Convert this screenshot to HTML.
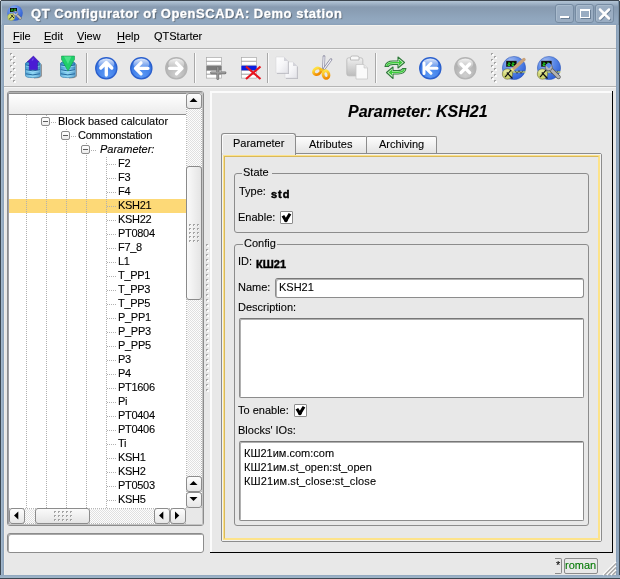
<!DOCTYPE html><html><head><meta charset="utf-8"><style>
*{box-sizing:border-box;margin:0;padding:0}
html,body{width:620px;height:579px;overflow:hidden;background:#e8e8e8;font-family:"Liberation Sans",sans-serif;font-size:11px;color:#000}
.a{position:absolute}
.t{position:absolute;white-space:nowrap;font-size:11px;line-height:14px;will-change:transform;-webkit-text-stroke:0.1px currentColor}
u{text-decoration:underline;text-underline-offset:2px}
svg{position:absolute;overflow:visible}
.btn{position:absolute;border:1px solid #8c8c8c;border-radius:3px;background:linear-gradient(#fdfdfd,#e6e6e6)}
</style></head><body>
<div class="a" style="left:0px;top:0px;width:620px;height:25px;background:linear-gradient(#3d4650 0,#3d4650 1px,#b3c4d4 1px,#a5b8cb 3px,#889bb1 7px,#8a9eb4 11px,#90a6bd 18px,#93a9c1 23px,#8ca2ba 24px,#8ca2ba 25px)"></div>
<div class="t" style="left:31px;top:7px;font-weight:bold;font-size:13px;letter-spacing:0.52px;color:#fff;-webkit-text-stroke:0.3px #fff;text-shadow:1px 1px 1px #55606c">QT Configurator of OpenSCADA: Demo station</div>
<div class="a" style="left:555px;top:4px;width:19px;height:19px;border:1px solid #768ba2;border-radius:3px;background:#9aadc2;box-shadow:inset 1px 1px 0 #a9bbcd"></div>
<div class="a" style="left:575px;top:4px;width:19px;height:19px;border:1px solid #768ba2;border-radius:3px;background:#9aadc2;box-shadow:inset 1px 1px 0 #a9bbcd"></div>
<div class="a" style="left:595px;top:4px;width:19px;height:19px;border:1px solid #768ba2;border-radius:3px;background:#9aadc2;box-shadow:inset 1px 1px 0 #a9bbcd"></div>
<div class="a" style="left:560px;top:16px;width:9px;height:2px;background:#fff;box-shadow:1px 1px 0 #6a7f95"></div>
<div class="a" style="left:580px;top:9px;width:10px;height:9px;border:1px solid #fff;border-top-width:2px;box-shadow:1px 1px 0 #6a7f95"></div>
<svg style="left:599px;top:9px" width="11" height="10" viewBox="0 0 11 10"><path d="M1 0.5 L10 9.5 M10 0.5 L1 9.5" stroke="#6a7f95" stroke-width="2.5" stroke-linecap="round" transform="translate(0.8,0.8)"/><path d="M1 0.5 L10 9.5 M10 0.5 L1 9.5" stroke="#fff" stroke-width="2.5" stroke-linecap="round"/></svg>
<svg style="left:7px;top:5px" width="16" height="16" viewBox="0 0 16 16">
<defs><radialGradient id="gb" cx="0.4" cy="0.3" r="0.75"><stop offset="0" stop-color="#9cb8f2"/><stop offset="0.6" stop-color="#4a78e0"/><stop offset="1" stop-color="#2a58c8"/></radialGradient></defs>
<circle cx="8" cy="8" r="7.8" fill="url(#gb)"/>
<rect x="3" y="3" width="7" height="4" fill="#0a0a0a"/><path d="M4.2 4.2 h1.6 v0.8 h-1.6 v0.9 h1.6 M7 4.2 h1.6 v0.8 h-1.6 v0.9 h1.6" stroke="#22cc22" stroke-width="0.7" fill="none"/>
<circle cx="4.2" cy="12" r="3.6" fill="#cfd86a" stroke="#7a8030" stroke-width="0.3"/><path d="M2.2 14.2 L6 10.4 M4 9.8 L7 13" stroke="#111" stroke-width="0.9"/>
<path d="M8.8 8.8 L13.2 13.2" stroke="#666" stroke-width="2.8" stroke-linecap="round"/><path d="M8.8 8.8 L13.2 13.2" stroke="#c0c0c0" stroke-width="1.8" stroke-linecap="round"/>
<circle cx="8.5" cy="8.3" r="2.4" fill="#c4c4c4" stroke="#666" stroke-width="0.5"/><path d="M6.8 6.6 L8.6 8.3 L9.8 7" stroke="#4a78e0" stroke-width="1.2" fill="none"/>
</svg>
<div class="a" style="left:0px;top:25px;width:4px;height:554px;background:linear-gradient(90deg,#3d4852 0,#3d4852 1px,#a8bccf 1px,#9ab0c6 2px,#8aa0b8 4px)"></div>
<div class="a" style="left:616px;top:25px;width:4px;height:554px;background:linear-gradient(90deg,#7d94ad 0,#95abc2 1px,#8ea4bb 3px,#3d4852 3px)"></div>
<div class="a" style="left:0px;top:0px;width:1px;height:25px;background:#3d4852"></div>
<div class="a" style="left:1px;top:1px;width:1px;height:24px;background:#b3c4d4"></div>
<div class="a" style="left:619px;top:0px;width:1px;height:25px;background:#3d4852"></div>
<div class="a" style="left:618px;top:1px;width:1px;height:24px;background:#7a90a6"></div>
<div class="a" style="left:0px;top:0px;width:1px;height:1px;background:#d0d0d0"></div>
<div class="a" style="left:619px;top:0px;width:1px;height:1px;background:#d0d0d0"></div>
<div class="a" style="left:0px;top:575px;width:620px;height:4px;background:linear-gradient(#8da3ba 0,#9ab0c6 1px,#a0b5c9 3px,#3d4852 3px)"></div>
<div class="a" style="left:4px;top:25px;width:612px;height:1px;background:#f4f2ee"></div>
<div class="a" style="left:4px;top:25px;width:1px;height:550px;background:#f0eeea"></div>
<div class="t" style="left:13px;top:29px;"><u>F</u>ile</div>
<div class="t" style="left:44px;top:29px;"><u>E</u>dit</div>
<div class="t" style="left:77px;top:29px;"><u>V</u>iew</div>
<div class="t" style="left:117px;top:29px;"><u>H</u>elp</div>
<div class="t" style="left:154px;top:29px;">QTStarter</div>
<div class="a" style="left:4px;top:48px;width:612px;height:1px;background:#b4b4b4"></div>
<div class="a" style="left:4px;top:49px;width:612px;height:1px;background:#f4f4f4"></div>
<div class="a" style="left:4px;top:86px;width:612px;height:1px;background:#b4b4b4"></div>
<div class="a" style="left:4px;top:87px;width:612px;height:1px;background:#f4f4f4"></div>
<div class="a" style="left:10px;top:53px;width:2px;height:2px;background:#a4a4a4"></div>
<div class="a" style="left:11px;top:54px;width:2px;height:2px;background:#fbfbfb"></div>
<div class="a" style="left:13px;top:56px;width:2px;height:2px;background:#a4a4a4"></div>
<div class="a" style="left:14px;top:57px;width:2px;height:2px;background:#fbfbfb"></div>
<div class="a" style="left:10px;top:59px;width:2px;height:2px;background:#a4a4a4"></div>
<div class="a" style="left:11px;top:60px;width:2px;height:2px;background:#fbfbfb"></div>
<div class="a" style="left:13px;top:62px;width:2px;height:2px;background:#a4a4a4"></div>
<div class="a" style="left:14px;top:63px;width:2px;height:2px;background:#fbfbfb"></div>
<div class="a" style="left:10px;top:65px;width:2px;height:2px;background:#a4a4a4"></div>
<div class="a" style="left:11px;top:66px;width:2px;height:2px;background:#fbfbfb"></div>
<div class="a" style="left:13px;top:68px;width:2px;height:2px;background:#a4a4a4"></div>
<div class="a" style="left:14px;top:69px;width:2px;height:2px;background:#fbfbfb"></div>
<div class="a" style="left:10px;top:71px;width:2px;height:2px;background:#a4a4a4"></div>
<div class="a" style="left:11px;top:72px;width:2px;height:2px;background:#fbfbfb"></div>
<div class="a" style="left:13px;top:74px;width:2px;height:2px;background:#a4a4a4"></div>
<div class="a" style="left:14px;top:75px;width:2px;height:2px;background:#fbfbfb"></div>
<div class="a" style="left:10px;top:77px;width:2px;height:2px;background:#a4a4a4"></div>
<div class="a" style="left:11px;top:78px;width:2px;height:2px;background:#fbfbfb"></div>
<div class="a" style="left:13px;top:80px;width:2px;height:2px;background:#a4a4a4"></div>
<div class="a" style="left:14px;top:81px;width:2px;height:2px;background:#fbfbfb"></div>
<div class="a" style="left:491px;top:53px;width:2px;height:2px;background:#a4a4a4"></div>
<div class="a" style="left:492px;top:54px;width:2px;height:2px;background:#fbfbfb"></div>
<div class="a" style="left:494px;top:56px;width:2px;height:2px;background:#a4a4a4"></div>
<div class="a" style="left:495px;top:57px;width:2px;height:2px;background:#fbfbfb"></div>
<div class="a" style="left:491px;top:59px;width:2px;height:2px;background:#a4a4a4"></div>
<div class="a" style="left:492px;top:60px;width:2px;height:2px;background:#fbfbfb"></div>
<div class="a" style="left:494px;top:62px;width:2px;height:2px;background:#a4a4a4"></div>
<div class="a" style="left:495px;top:63px;width:2px;height:2px;background:#fbfbfb"></div>
<div class="a" style="left:491px;top:65px;width:2px;height:2px;background:#a4a4a4"></div>
<div class="a" style="left:492px;top:66px;width:2px;height:2px;background:#fbfbfb"></div>
<div class="a" style="left:494px;top:68px;width:2px;height:2px;background:#a4a4a4"></div>
<div class="a" style="left:495px;top:69px;width:2px;height:2px;background:#fbfbfb"></div>
<div class="a" style="left:491px;top:71px;width:2px;height:2px;background:#a4a4a4"></div>
<div class="a" style="left:492px;top:72px;width:2px;height:2px;background:#fbfbfb"></div>
<div class="a" style="left:494px;top:74px;width:2px;height:2px;background:#a4a4a4"></div>
<div class="a" style="left:495px;top:75px;width:2px;height:2px;background:#fbfbfb"></div>
<div class="a" style="left:491px;top:77px;width:2px;height:2px;background:#a4a4a4"></div>
<div class="a" style="left:492px;top:78px;width:2px;height:2px;background:#fbfbfb"></div>
<div class="a" style="left:494px;top:80px;width:2px;height:2px;background:#a4a4a4"></div>
<div class="a" style="left:495px;top:81px;width:2px;height:2px;background:#fbfbfb"></div>
<div class="a" style="left:86px;top:53px;width:1px;height:30px;background:#a8a8a8"></div>
<div class="a" style="left:87px;top:53px;width:1px;height:30px;background:#fafafa"></div>
<div class="a" style="left:194px;top:53px;width:1px;height:30px;background:#a8a8a8"></div>
<div class="a" style="left:195px;top:53px;width:1px;height:30px;background:#fafafa"></div>
<div class="a" style="left:267px;top:53px;width:1px;height:30px;background:#a8a8a8"></div>
<div class="a" style="left:268px;top:53px;width:1px;height:30px;background:#fafafa"></div>
<div class="a" style="left:375px;top:53px;width:1px;height:30px;background:#a8a8a8"></div>
<div class="a" style="left:376px;top:53px;width:1px;height:30px;background:#fafafa"></div>
<svg style="left:24px;top:55px" width="20" height="25" viewBox="0 0 20 25">
<defs><linearGradient id="cyl24" x1="0" x2="1"><stop offset="0" stop-color="#2286c4"/><stop offset="0.5" stop-color="#6ccaf0"/><stop offset="1" stop-color="#1d74b4"/></linearGradient>
<linearGradient id="cyv24" x1="0" y1="0" x2="0" y2="1"><stop offset="0" stop-color="#fff" stop-opacity="0"/><stop offset="1" stop-color="#c8f0ff" stop-opacity="0.45"/></linearGradient></defs>
<path d="M17 9 L18 9.5 L18 21 Q17 23.5 10 23.5 L10 22.5 Q16.5 22 17 20 Z" fill="#303030" opacity="0.45"/>
<path d="M1.5 8.5 Q1.5 6.8 8.8 6.8 Q16.2 6.8 16.2 8.5 L16.2 20.5 Q16.2 22.6 8.8 22.6 Q1.5 22.6 1.5 20.5 Z" fill="url(#cyl24)" stroke="#1468a0" stroke-width="0.7"/>
<path d="M1.5 8.5 Q1.5 6.8 8.8 6.8 Q16.2 6.8 16.2 8.5 L16.2 20.5 Q16.2 22.6 8.8 22.6 Q1.5 22.6 1.5 20.5 Z" fill="url(#cyv24)"/>
<path d="M1.8 10 Q8.8 12.2 15.9 10 M1.8 14.8 Q8.8 17 15.9 14.8 M1.8 18.8 Q8.8 21 15.9 18.8" stroke="#1a5e94" stroke-width="0.9" fill="none"/>
<path d="M1.8 11 Q8.8 13.2 15.9 11 M1.8 15.8 Q8.8 18 15.9 15.8" stroke="#a8e4fa" stroke-width="0.8" fill="none" opacity="0.8"/>
<path d="M9.4 1 L15.2 7 L13.5 7 L13.5 14.7 L5.2 14.7 L5.2 7 L3 7 Z" fill="#4a1cd4" stroke="#3010a0" stroke-width="0.5" stroke-linejoin="round"/><path d="M9.4 2.5 L7.5 6 L9.4 5 Z" fill="#8a6cf0" opacity="0.8"/>
</svg>
<svg style="left:59px;top:55px" width="20" height="25" viewBox="0 0 20 25">
<defs><linearGradient id="cyl59" x1="0" x2="1"><stop offset="0" stop-color="#2286c4"/><stop offset="0.5" stop-color="#6ccaf0"/><stop offset="1" stop-color="#1d74b4"/></linearGradient>
<linearGradient id="cyv59" x1="0" y1="0" x2="0" y2="1"><stop offset="0" stop-color="#fff" stop-opacity="0"/><stop offset="1" stop-color="#c8f0ff" stop-opacity="0.45"/></linearGradient></defs>
<path d="M17 9 L18 9.5 L18 21 Q17 23.5 10 23.5 L10 22.5 Q16.5 22 17 20 Z" fill="#303030" opacity="0.45"/>
<path d="M1.5 8.5 Q1.5 6.8 8.8 6.8 Q16.2 6.8 16.2 8.5 L16.2 20.5 Q16.2 22.6 8.8 22.6 Q1.5 22.6 1.5 20.5 Z" fill="url(#cyl59)" stroke="#1468a0" stroke-width="0.7"/>
<path d="M1.5 8.5 Q1.5 6.8 8.8 6.8 Q16.2 6.8 16.2 8.5 L16.2 20.5 Q16.2 22.6 8.8 22.6 Q1.5 22.6 1.5 20.5 Z" fill="url(#cyv59)"/>
<path d="M1.8 10 Q8.8 12.2 15.9 10 M1.8 14.8 Q8.8 17 15.9 14.8 M1.8 18.8 Q8.8 21 15.9 18.8" stroke="#1a5e94" stroke-width="0.9" fill="none"/>
<path d="M1.8 11 Q8.8 13.2 15.9 11 M1.8 15.8 Q8.8 18 15.9 15.8" stroke="#a8e4fa" stroke-width="0.8" fill="none" opacity="0.8"/>
<path d="M2.5 1 L15.5 1 L15.5 4.5 L9 16 L2.5 4.5 Z" fill="#1fd06a" stroke="#0d8c40" stroke-width="0.5" stroke-linejoin="round"/><path d="M5 1.5 L12.5 1.5 L9 9 Z" fill="#6af0a0" opacity="0.6"/>
</svg>
<svg style="left:95px;top:57px" width="23" height="23" viewBox="0 0 23 23">
<defs><radialGradient id="cg95" cx="0.5" cy="0.8" r="0.75"><stop offset="0" stop-color="#5d9af5"/><stop offset="1" stop-color="#2f6ee0"/></radialGradient>
<linearGradient id="hl95" x1="0" y1="0" x2="0" y2="1"><stop offset="0" stop-color="#fff" stop-opacity="0.85"/><stop offset="1" stop-color="#fff" stop-opacity="0"/></linearGradient></defs>
<circle cx="11.3" cy="11.3" r="10.6" fill="url(#cg95)" stroke="#2a5fcc" stroke-width="1.3"/>
<ellipse cx="11.3" cy="7" rx="8" ry="5.5" fill="url(#hl95)"/>
<path d="M11.3 5.5 L11.3 18 M5.8 11 L11.3 5.5 L16.8 11" stroke="#fff" stroke-width="3.3" fill="none" stroke-linecap="round" stroke-linejoin="round"/>
</svg>
<svg style="left:130px;top:57px" width="23" height="23" viewBox="0 0 23 23">
<defs><radialGradient id="cg130" cx="0.5" cy="0.8" r="0.75"><stop offset="0" stop-color="#5d9af5"/><stop offset="1" stop-color="#2f6ee0"/></radialGradient>
<linearGradient id="hl130" x1="0" y1="0" x2="0" y2="1"><stop offset="0" stop-color="#fff" stop-opacity="0.85"/><stop offset="1" stop-color="#fff" stop-opacity="0"/></linearGradient></defs>
<circle cx="11.3" cy="11.3" r="10.6" fill="url(#cg130)" stroke="#2a5fcc" stroke-width="1.3"/>
<ellipse cx="11.3" cy="7" rx="8" ry="5.5" fill="url(#hl130)"/>
<path d="M5.5 11.3 L18 11.3 M11 5.8 L5.5 11.3 L11 16.8" stroke="#fff" stroke-width="3.3" fill="none" stroke-linecap="round" stroke-linejoin="round"/>
</svg>
<svg style="left:165px;top:57px" width="23" height="23" viewBox="0 0 23 23">
<defs><radialGradient id="cg165" cx="0.5" cy="0.8" r="0.75"><stop offset="0" stop-color="#cfcfcf"/><stop offset="1" stop-color="#a9a9a9"/></radialGradient>
<linearGradient id="hl165" x1="0" y1="0" x2="0" y2="1"><stop offset="0" stop-color="#fff" stop-opacity="0.85"/><stop offset="1" stop-color="#fff" stop-opacity="0"/></linearGradient></defs>
<circle cx="11.3" cy="11.3" r="10.6" fill="url(#cg165)" stroke="#b4b4b4" stroke-width="1.3"/>
<ellipse cx="11.3" cy="7" rx="8" ry="5.5" fill="url(#hl165)"/>
<path d="M17 11.3 L4.6 11.3 M11.5 5.8 L17 11.3 L11.5 16.8" stroke="#fff" stroke-width="3.3" fill="none" stroke-linecap="round" stroke-linejoin="round"/>
</svg>
<svg style="left:419px;top:57px" width="23" height="23" viewBox="0 0 23 23">
<defs><radialGradient id="cg419" cx="0.5" cy="0.8" r="0.75"><stop offset="0" stop-color="#5d9af5"/><stop offset="1" stop-color="#2f6ee0"/></radialGradient>
<linearGradient id="hl419" x1="0" y1="0" x2="0" y2="1"><stop offset="0" stop-color="#fff" stop-opacity="0.85"/><stop offset="1" stop-color="#fff" stop-opacity="0"/></linearGradient></defs>
<circle cx="11.3" cy="11.3" r="10.6" fill="url(#cg419)" stroke="#2a5fcc" stroke-width="1.3"/>
<ellipse cx="11.3" cy="7" rx="8" ry="5.5" fill="url(#hl419)"/>
<path d="M5 6 L5 16.6 M7 11.3 L18 11.3 M12 6.3 L7 11.3 L12 16.3" stroke="#fff" stroke-width="3" fill="none" stroke-linecap="round" stroke-linejoin="round"/>
</svg>
<svg style="left:454px;top:57px" width="23" height="23" viewBox="0 0 23 23">
<defs><radialGradient id="cg454" cx="0.5" cy="0.8" r="0.75"><stop offset="0" stop-color="#cfcfcf"/><stop offset="1" stop-color="#a9a9a9"/></radialGradient>
<linearGradient id="hl454" x1="0" y1="0" x2="0" y2="1"><stop offset="0" stop-color="#fff" stop-opacity="0.85"/><stop offset="1" stop-color="#fff" stop-opacity="0"/></linearGradient></defs>
<circle cx="11.3" cy="11.3" r="10.6" fill="url(#cg454)" stroke="#b4b4b4" stroke-width="1.3"/>
<ellipse cx="11.3" cy="7" rx="8" ry="5.5" fill="url(#hl454)"/>
<path d="M7 7 L15.6 15.6 M15.6 7 L7 15.6" stroke="#fff" stroke-width="3.4" fill="none" stroke-linecap="round"/>
</svg>
<svg style="left:206px;top:57px" width="22" height="23" viewBox="0 0 22 23">
<rect x="0.5" y="0.5" width="15" height="3.6" fill="#fff" stroke="#a8a8a8" stroke-width="0.7"/><rect x="0.5" y="4.6" width="15" height="3.6" fill="#fff" stroke="#a8a8a8" stroke-width="0.7"/><rect x="0.5" y="13.4" width="15" height="3.6" fill="#fff" stroke="#a8a8a8" stroke-width="0.7"/><rect x="0.5" y="17.5" width="15" height="3.6" fill="#fff" stroke="#a8a8a8" stroke-width="0.7"/><rect x="0.3" y="8.7" width="15.4" height="4.6" fill="#7a7a7a"/><path d="M5.5 15.8 L19 15.8 M11.8 10.8 L11.8 21.6" stroke="#6e6e6e" stroke-width="2.8" stroke-linecap="round"/><path d="M5.5 15.8 L19 15.8 M11.8 10.8 L11.8 21.6" stroke="#9a9a9a" stroke-width="1.4" stroke-linecap="round"/></svg>
<svg style="left:241px;top:57px" width="22" height="23" viewBox="0 0 22 23">
<rect x="0.5" y="0.5" width="15" height="3.6" fill="#fff" stroke="#a8a8a8" stroke-width="0.7"/><rect x="0.5" y="4.6" width="15" height="3.6" fill="#fff" stroke="#a8a8a8" stroke-width="0.7"/><rect x="0.5" y="13.4" width="15" height="3.6" fill="#fff" stroke="#a8a8a8" stroke-width="0.7"/><rect x="0.5" y="17.5" width="15" height="3.6" fill="#fff" stroke="#a8a8a8" stroke-width="0.7"/><rect x="0.3" y="8.7" width="15.4" height="4.6" fill="#0a1ee0"/><path d="M5 9.5 L19.5 22 M19.5 9.5 L5 22" stroke="#e8141e" stroke-width="2.2"/></svg>
<svg style="left:275px;top:56px" width="25" height="25" viewBox="0 0 25 25">
<defs><linearGradient id="pg" x1="0" y1="0" x2="1" y2="1"><stop offset="0" stop-color="#ffffff"/><stop offset="0.5" stop-color="#f6f6f8"/><stop offset="1" stop-color="#e2e2e8"/></linearGradient></defs>
<path d="M11 7 L19 7 L23 11 L23 23 L11 23 Z" fill="#a9a9b2" opacity="0.7"/>
<path d="M10 6 L18 6 L22 10 L22 22 L10 22 Z" fill="url(#pg)" stroke="#d0d0d6" stroke-width="0.5"/>
<path d="M18 6 L18 10 L22 10 Z" fill="#d4d4da"/>
<path d="M2 2 L10 2 L14 6 L14 18 L2 18 Z" fill="#a9a9b2" opacity="0.7"/>
<path d="M1 1 L9 1 L13 5 L13 17 L1 17 Z" fill="url(#pg)" stroke="#d0d0d6" stroke-width="0.5"/>
<path d="M9 1 L9 5 L13 5 Z" fill="#d4d4da"/>
</svg>
<svg style="left:310px;top:55px" width="24" height="26" viewBox="0 0 24 26">
<defs><linearGradient id="sg" x1="0" y1="0" x2="0" y2="1"><stop offset="0" stop-color="#ffe040"/><stop offset="1" stop-color="#f08a00"/></linearGradient></defs>
<path d="M14 1.5 L13.5 14" stroke="#8a8aa0" stroke-width="2.6" stroke-linecap="round"/><path d="M14 1.8 L13.6 13" stroke="#f4f4fa" stroke-width="1.2" stroke-linecap="round"/>
<path d="M21 4.5 L14 14" stroke="#8a8aa0" stroke-width="2.6" stroke-linecap="round"/><path d="M20.8 4.8 L14.4 13.5" stroke="#f4f4fa" stroke-width="1.2" stroke-linecap="round"/>
<ellipse cx="7.2" cy="16.3" rx="3.9" ry="3.1" transform="rotate(-30 7.2 16.3)" fill="none" stroke="url(#sg)" stroke-width="2.8"/>
<ellipse cx="16" cy="19.6" rx="2.9" ry="3.9" transform="rotate(-15 16 19.6)" fill="none" stroke="url(#sg)" stroke-width="2.8"/>
<path d="M10.5 14.5 L13.5 15.5" stroke="#f8c020" stroke-width="2.5"/>
</svg>
<svg style="left:346px;top:55px" width="24" height="26" viewBox="0 0 24 26">
<defs><linearGradient id="cbg" x1="0" y1="0" x2="0" y2="1"><stop offset="0" stop-color="#f0f0f0"/><stop offset="1" stop-color="#bcbcbc"/></linearGradient></defs>
<rect x="0.8" y="2.8" width="16" height="18" rx="2" fill="url(#cbg)" stroke="#b8b8b8" stroke-width="0.8"/>
<path d="M4.5 5 L4.5 2.5 Q4.5 1 6.5 1 L11 1 Q13 1 13 2.5 L13 5 Z" fill="#f8f8f8" stroke="#b0b0b0" stroke-width="0.8"/>
<path d="M10 9.5 L18 9.5 L21.5 13 L21.5 24 L10 24 Z" fill="#fafafa" stroke="#c8c8c8" stroke-width="0.8"/>
<path d="M18 9.5 L18 13 L21.5 13" fill="#e6e6e6" stroke="#c8c8c8" stroke-width="0.6"/>
</svg>
<svg style="left:383px;top:55px" width="25" height="26" viewBox="0 0 25 26">
<path d="M2 11.5 Q3 6 10 6 L15 6 L15 2 L21.5 7.5 L15 13 L15 9.5 L10 9.5 Q6 9.5 5.5 11.5 Z" fill="#e4f8dc" stroke="#2f7a3a" stroke-width="1.1" stroke-linejoin="round"/>
<path d="M4 10.5 Q5 7.8 10 7.8 L17.5 7.8" stroke="#3ccc3c" stroke-width="1.6" fill="none" stroke-linecap="round"/><path d="M16 4.5 L19.5 7.6 L16 10.8 Z" fill="#3ccc3c"/>
<path d="M23 13.5 Q22 19 15 19 L10 19 L10 23.5 L3.5 17.5 L10 12 L10 15.5 L15 15.5 Q19 15.5 19.5 13.5 Z" fill="#e4f8dc" stroke="#2f7a3a" stroke-width="1.1" stroke-linejoin="round"/>
<path d="M21 14.5 Q20 17.2 15 17.2 L7.5 17.2" stroke="#3ccc3c" stroke-width="1.6" fill="none" stroke-linecap="round"/><path d="M9 14.3 L5.5 17.4 L9 20.6 Z" fill="#3ccc3c"/>
</svg>
<svg style="left:502px;top:56px" width="25" height="25" viewBox="0 0 25 25">
<defs><radialGradient id="cf502" cx="0.35" cy="0.25" r="0.8"><stop offset="0" stop-color="#a9c0f2"/><stop offset="0.5" stop-color="#5a88e6"/><stop offset="1" stop-color="#2d5ed6"/></radialGradient></defs>
<circle cx="12" cy="12" r="11.6" fill="url(#cf502)" stroke="#2850b0" stroke-width="0.5"/>
<rect x="4.2" y="5" width="10.3" height="5.6" fill="#0a0a0a" stroke="#333" stroke-width="0.4"/>
<path d="M6 7 h2 v1 h-2 v1.5 h2 M10 7 h2 v1 h-2 v1.5 h2" stroke="#20e020" stroke-width="0.9" fill="none"/>
<path d="M10 16 L23.5 16" stroke="#f0f040" stroke-width="1" fill="none"/><path d="M13 14.5 L15 17.5 L17 14.5 L19 17.5 L21 14.5" stroke="#222" stroke-width="0.6" fill="none"/>
<path d="M9.5 14.5 L22 3.5" stroke="#c9a27a" stroke-width="3.4" stroke-linecap="round"/><path d="M9 15 L11 13" stroke="#e8e090" stroke-width="3.4"/>
<circle cx="5.5" cy="18" r="5.2" fill="#cfd672" stroke="#505020" stroke-width="0.5"/>
<ellipse cx="5" cy="15.8" rx="3.6" ry="2.2" fill="#eef0b0" opacity="0.6"/>
<path d="M3 21.2 L9 14.2 M4.8 16.5 L10.5 22.5" stroke="#111" stroke-width="1.2"/>
</svg>
<svg style="left:537px;top:56px" width="25" height="25" viewBox="0 0 25 25">
<defs><radialGradient id="cf537" cx="0.35" cy="0.25" r="0.8"><stop offset="0" stop-color="#a9c0f2"/><stop offset="0.5" stop-color="#5a88e6"/><stop offset="1" stop-color="#2d5ed6"/></radialGradient></defs>
<circle cx="12" cy="12" r="11.6" fill="url(#cf537)" stroke="#2850b0" stroke-width="0.5"/>
<rect x="4.2" y="5" width="10.3" height="5.6" fill="#0a0a0a" stroke="#333" stroke-width="0.4"/>
<path d="M6 7 h2 v1 h-2 v1.5 h2 M10 7 h2 v1 h-2 v1.5 h2" stroke="#20e020" stroke-width="0.9" fill="none"/>
<path d="M10 16 L23.5 16" stroke="#f0f040" stroke-width="1" fill="none"/><path d="M13 14.5 L15 17.5 L17 14.5 L19 17.5 L21 14.5" stroke="#222" stroke-width="0.6" fill="none"/>
<path d="M12.5 12 L21.5 21" stroke="#555" stroke-width="4.4" stroke-linecap="round"/><path d="M12.5 12 L21.5 21" stroke="#b4b4b4" stroke-width="3" stroke-linecap="round"/><circle cx="11.8" cy="11.2" r="3.6" fill="#b8b8b8" stroke="#555" stroke-width="0.7"/><path d="M9 8.8 L12 11.6 L13.8 9.6 L11.5 7" fill="#5a88e6" stroke="#5a88e6" stroke-width="1.4"/>
<circle cx="5.5" cy="18" r="5.2" fill="#cfd672" stroke="#505020" stroke-width="0.5"/>
<ellipse cx="5" cy="15.8" rx="3.6" ry="2.2" fill="#eef0b0" opacity="0.6"/>
<path d="M3 21.2 L9 14.2 M4.8 16.5 L10.5 22.5" stroke="#111" stroke-width="1.2"/>
</svg>
<div class="a" style="left:7px;top:91px;width:197px;height:435px;border:1px solid #8c8c8c;border-radius:3px;background:#fff"></div>
<div class="a" style="left:8px;top:92px;width:1px;height:433px;background:#a0a0a6"></div>
<div class="a" style="left:8px;top:92px;width:195px;height:1px;background:#b0b0b0"></div>
<div class="a" style="left:202px;top:92px;width:1px;height:433px;background:#c4c4c4"></div>
<div class="a" style="left:8px;top:524px;width:195px;height:1px;background:#c4c4c4"></div>
<div class="a" style="left:9px;top:93px;width:177px;height:1px;background:#8c8c8c"></div>
<div class="a" style="left:9px;top:94px;width:177px;height:20px;background:linear-gradient(#ffffff,#ececec)"></div>
<div class="a" style="left:9px;top:114px;width:177px;height:1px;background:#8c8c8c"></div>
<div class="a" style="left:9px;top:115px;width:177px;height:393px;overflow:hidden">
<div class="a" style="left:0px;top:84px;width:177px;height:14px;background:#fdd977"></div>
<div class="a" style="left:17px;top:0px;width:1px;height:393px;background:repeating-linear-gradient(#b0b0b0 0,#b0b0b0 1px,transparent 1px,transparent 2px)"></div>
<div class="a" style="left:37px;top:0px;width:1px;height:2px;background:repeating-linear-gradient(#b0b0b0 0,#b0b0b0 1px,transparent 1px,transparent 2px)"></div>
<div class="a" style="left:37px;top:12px;width:1px;height:381px;background:repeating-linear-gradient(#b0b0b0 0,#b0b0b0 1px,transparent 1px,transparent 2px)"></div>
<div class="a" style="left:57px;top:14px;width:1px;height:2px;background:repeating-linear-gradient(#b0b0b0 0,#b0b0b0 1px,transparent 1px,transparent 2px)"></div>
<div class="a" style="left:57px;top:26px;width:1px;height:367px;background:repeating-linear-gradient(#b0b0b0 0,#b0b0b0 1px,transparent 1px,transparent 2px)"></div>
<div class="a" style="left:77px;top:28px;width:1px;height:2px;background:repeating-linear-gradient(#b0b0b0 0,#b0b0b0 1px,transparent 1px,transparent 2px)"></div>
<div class="a" style="left:77px;top:40px;width:1px;height:353px;background:repeating-linear-gradient(#b0b0b0 0,#b0b0b0 1px,transparent 1px,transparent 2px)"></div>
<div class="a" style="left:97px;top:42px;width:1px;height:351px;background:repeating-linear-gradient(#b0b0b0 0,#b0b0b0 1px,transparent 1px,transparent 2px)"></div>
<div class="a" style="left:32px;top:2px;width:9px;height:9px;border:1px solid #8a8a8a;border-radius:2px;background:linear-gradient(#fff,#ececec)"></div>
<div class="a" style="left:34px;top:6px;width:5px;height:1px;background:#5c5c5c"></div>
<div class="a" style="left:42px;top:7px;width:6px;height:1px;background:repeating-linear-gradient(90deg,#b0b0b0 0,#b0b0b0 1px,transparent 1px,transparent 2px)"></div>
<div class="a" style="left:52px;top:16px;width:9px;height:9px;border:1px solid #8a8a8a;border-radius:2px;background:linear-gradient(#fff,#ececec)"></div>
<div class="a" style="left:54px;top:20px;width:5px;height:1px;background:#5c5c5c"></div>
<div class="a" style="left:62px;top:21px;width:6px;height:1px;background:repeating-linear-gradient(90deg,#b0b0b0 0,#b0b0b0 1px,transparent 1px,transparent 2px)"></div>
<div class="a" style="left:72px;top:30px;width:9px;height:9px;border:1px solid #8a8a8a;border-radius:2px;background:linear-gradient(#fff,#ececec)"></div>
<div class="a" style="left:74px;top:34px;width:5px;height:1px;background:#5c5c5c"></div>
<div class="a" style="left:82px;top:35px;width:6px;height:1px;background:repeating-linear-gradient(90deg,#b0b0b0 0,#b0b0b0 1px,transparent 1px,transparent 2px)"></div>
<div class="a" style="left:98px;top:49px;width:10px;height:1px;background:repeating-linear-gradient(90deg,#b0b0b0 0,#b0b0b0 1px,transparent 1px,transparent 2px)"></div>
<div class="t" style="left:109px;top:41px;letter-spacing:-0.3px">F2</div>
<div class="a" style="left:98px;top:63px;width:10px;height:1px;background:repeating-linear-gradient(90deg,#b0b0b0 0,#b0b0b0 1px,transparent 1px,transparent 2px)"></div>
<div class="t" style="left:109px;top:55px;letter-spacing:-0.3px">F3</div>
<div class="a" style="left:98px;top:77px;width:10px;height:1px;background:repeating-linear-gradient(90deg,#b0b0b0 0,#b0b0b0 1px,transparent 1px,transparent 2px)"></div>
<div class="t" style="left:109px;top:69px;letter-spacing:-0.3px">F4</div>
<div class="a" style="left:98px;top:91px;width:10px;height:1px;background:repeating-linear-gradient(90deg,#b0b0b0 0,#b0b0b0 1px,transparent 1px,transparent 2px)"></div>
<div class="t" style="left:109px;top:83px;letter-spacing:-0.3px">KSH21</div>
<div class="a" style="left:98px;top:105px;width:10px;height:1px;background:repeating-linear-gradient(90deg,#b0b0b0 0,#b0b0b0 1px,transparent 1px,transparent 2px)"></div>
<div class="t" style="left:109px;top:97px;letter-spacing:-0.3px">KSH22</div>
<div class="a" style="left:98px;top:119px;width:10px;height:1px;background:repeating-linear-gradient(90deg,#b0b0b0 0,#b0b0b0 1px,transparent 1px,transparent 2px)"></div>
<div class="t" style="left:109px;top:111px;letter-spacing:-0.3px">PT0804</div>
<div class="a" style="left:98px;top:133px;width:10px;height:1px;background:repeating-linear-gradient(90deg,#b0b0b0 0,#b0b0b0 1px,transparent 1px,transparent 2px)"></div>
<div class="t" style="left:109px;top:125px;letter-spacing:-0.3px">F7_8</div>
<div class="a" style="left:98px;top:147px;width:10px;height:1px;background:repeating-linear-gradient(90deg,#b0b0b0 0,#b0b0b0 1px,transparent 1px,transparent 2px)"></div>
<div class="t" style="left:109px;top:139px;letter-spacing:-0.3px">L1</div>
<div class="a" style="left:98px;top:161px;width:10px;height:1px;background:repeating-linear-gradient(90deg,#b0b0b0 0,#b0b0b0 1px,transparent 1px,transparent 2px)"></div>
<div class="t" style="left:109px;top:153px;letter-spacing:-0.3px">T_PP1</div>
<div class="a" style="left:98px;top:175px;width:10px;height:1px;background:repeating-linear-gradient(90deg,#b0b0b0 0,#b0b0b0 1px,transparent 1px,transparent 2px)"></div>
<div class="t" style="left:109px;top:167px;letter-spacing:-0.3px">T_PP3</div>
<div class="a" style="left:98px;top:189px;width:10px;height:1px;background:repeating-linear-gradient(90deg,#b0b0b0 0,#b0b0b0 1px,transparent 1px,transparent 2px)"></div>
<div class="t" style="left:109px;top:181px;letter-spacing:-0.3px">T_PP5</div>
<div class="a" style="left:98px;top:203px;width:10px;height:1px;background:repeating-linear-gradient(90deg,#b0b0b0 0,#b0b0b0 1px,transparent 1px,transparent 2px)"></div>
<div class="t" style="left:109px;top:195px;letter-spacing:-0.3px">P_PP1</div>
<div class="a" style="left:98px;top:217px;width:10px;height:1px;background:repeating-linear-gradient(90deg,#b0b0b0 0,#b0b0b0 1px,transparent 1px,transparent 2px)"></div>
<div class="t" style="left:109px;top:209px;letter-spacing:-0.3px">P_PP3</div>
<div class="a" style="left:98px;top:231px;width:10px;height:1px;background:repeating-linear-gradient(90deg,#b0b0b0 0,#b0b0b0 1px,transparent 1px,transparent 2px)"></div>
<div class="t" style="left:109px;top:223px;letter-spacing:-0.3px">P_PP5</div>
<div class="a" style="left:98px;top:245px;width:10px;height:1px;background:repeating-linear-gradient(90deg,#b0b0b0 0,#b0b0b0 1px,transparent 1px,transparent 2px)"></div>
<div class="t" style="left:109px;top:237px;letter-spacing:-0.3px">P3</div>
<div class="a" style="left:98px;top:259px;width:10px;height:1px;background:repeating-linear-gradient(90deg,#b0b0b0 0,#b0b0b0 1px,transparent 1px,transparent 2px)"></div>
<div class="t" style="left:109px;top:251px;letter-spacing:-0.3px">P4</div>
<div class="a" style="left:98px;top:273px;width:10px;height:1px;background:repeating-linear-gradient(90deg,#b0b0b0 0,#b0b0b0 1px,transparent 1px,transparent 2px)"></div>
<div class="t" style="left:109px;top:265px;letter-spacing:-0.3px">PT1606</div>
<div class="a" style="left:98px;top:287px;width:10px;height:1px;background:repeating-linear-gradient(90deg,#b0b0b0 0,#b0b0b0 1px,transparent 1px,transparent 2px)"></div>
<div class="t" style="left:109px;top:279px;letter-spacing:-0.3px">Pi</div>
<div class="a" style="left:98px;top:301px;width:10px;height:1px;background:repeating-linear-gradient(90deg,#b0b0b0 0,#b0b0b0 1px,transparent 1px,transparent 2px)"></div>
<div class="t" style="left:109px;top:293px;letter-spacing:-0.3px">PT0404</div>
<div class="a" style="left:98px;top:315px;width:10px;height:1px;background:repeating-linear-gradient(90deg,#b0b0b0 0,#b0b0b0 1px,transparent 1px,transparent 2px)"></div>
<div class="t" style="left:109px;top:307px;letter-spacing:-0.3px">PT0406</div>
<div class="a" style="left:98px;top:329px;width:10px;height:1px;background:repeating-linear-gradient(90deg,#b0b0b0 0,#b0b0b0 1px,transparent 1px,transparent 2px)"></div>
<div class="t" style="left:109px;top:321px;letter-spacing:-0.3px">Ti</div>
<div class="a" style="left:98px;top:343px;width:10px;height:1px;background:repeating-linear-gradient(90deg,#b0b0b0 0,#b0b0b0 1px,transparent 1px,transparent 2px)"></div>
<div class="t" style="left:109px;top:335px;letter-spacing:-0.3px">KSH1</div>
<div class="a" style="left:98px;top:357px;width:10px;height:1px;background:repeating-linear-gradient(90deg,#b0b0b0 0,#b0b0b0 1px,transparent 1px,transparent 2px)"></div>
<div class="t" style="left:109px;top:349px;letter-spacing:-0.3px">KSH2</div>
<div class="a" style="left:98px;top:371px;width:10px;height:1px;background:repeating-linear-gradient(90deg,#b0b0b0 0,#b0b0b0 1px,transparent 1px,transparent 2px)"></div>
<div class="t" style="left:109px;top:363px;letter-spacing:-0.3px">PT0503</div>
<div class="a" style="left:98px;top:385px;width:10px;height:1px;background:repeating-linear-gradient(90deg,#b0b0b0 0,#b0b0b0 1px,transparent 1px,transparent 2px)"></div>
<div class="t" style="left:109px;top:377px;letter-spacing:-0.3px">KSH5</div>
<div class="t" style="left:49px;top:-1px;">Block based calculator</div>
<div class="t" style="left:69px;top:13px;letter-spacing:-0.23px">Commonstation</div>
<div class="t" style="left:91px;top:27px;font-style:italic">Parameter:</div>
</div>
<div class="a" style="left:186px;top:93px;width:16px;height:415px;background:#fff;background-image:repeating-conic-gradient(#e0e0e0 0 25%,#fdfdfd 0 50%);background-size:2px 2px"></div>
<div class="a" style="left:186px;top:93px;width:1px;height:415px;background:repeating-linear-gradient(#b8b8b8 0,#b8b8b8 1px,#fff 1px,#fff 2px)"></div>
<div class="a" style="left:201px;top:93px;width:1px;height:415px;background:repeating-linear-gradient(#b8b8b8 0,#b8b8b8 1px,#fff 1px,#fff 2px)"></div>
<div class="btn" style="left:186px;top:93px;width:16px;height:16px"></div>
<svg style="left:186px;top:93px" width="16" height="16"><path d="M3.5 9 L11.5 9 L7.5 5 Z" fill="#000"/></svg>
<div class="btn" style="left:186px;top:166px;width:16px;height:134px;border-color:#8a8a8a;background:linear-gradient(90deg,#fafafa,#e4e4e4)"></div>
<div class="a" style="left:189px;top:224px;width:2px;height:2px;background:#a4a4a4"></div>
<div class="a" style="left:190px;top:225px;width:1px;height:1px;background:#f8f8f8"></div>
<div class="a" style="left:193px;top:224px;width:2px;height:2px;background:#a4a4a4"></div>
<div class="a" style="left:194px;top:225px;width:1px;height:1px;background:#f8f8f8"></div>
<div class="a" style="left:197px;top:224px;width:2px;height:2px;background:#a4a4a4"></div>
<div class="a" style="left:198px;top:225px;width:1px;height:1px;background:#f8f8f8"></div>
<div class="a" style="left:189px;top:228px;width:2px;height:2px;background:#a4a4a4"></div>
<div class="a" style="left:190px;top:229px;width:1px;height:1px;background:#f8f8f8"></div>
<div class="a" style="left:193px;top:228px;width:2px;height:2px;background:#a4a4a4"></div>
<div class="a" style="left:194px;top:229px;width:1px;height:1px;background:#f8f8f8"></div>
<div class="a" style="left:197px;top:228px;width:2px;height:2px;background:#a4a4a4"></div>
<div class="a" style="left:198px;top:229px;width:1px;height:1px;background:#f8f8f8"></div>
<div class="a" style="left:189px;top:232px;width:2px;height:2px;background:#a4a4a4"></div>
<div class="a" style="left:190px;top:233px;width:1px;height:1px;background:#f8f8f8"></div>
<div class="a" style="left:193px;top:232px;width:2px;height:2px;background:#a4a4a4"></div>
<div class="a" style="left:194px;top:233px;width:1px;height:1px;background:#f8f8f8"></div>
<div class="a" style="left:197px;top:232px;width:2px;height:2px;background:#a4a4a4"></div>
<div class="a" style="left:198px;top:233px;width:1px;height:1px;background:#f8f8f8"></div>
<div class="a" style="left:189px;top:236px;width:2px;height:2px;background:#a4a4a4"></div>
<div class="a" style="left:190px;top:237px;width:1px;height:1px;background:#f8f8f8"></div>
<div class="a" style="left:193px;top:236px;width:2px;height:2px;background:#a4a4a4"></div>
<div class="a" style="left:194px;top:237px;width:1px;height:1px;background:#f8f8f8"></div>
<div class="a" style="left:197px;top:236px;width:2px;height:2px;background:#a4a4a4"></div>
<div class="a" style="left:198px;top:237px;width:1px;height:1px;background:#f8f8f8"></div>
<div class="a" style="left:189px;top:240px;width:2px;height:2px;background:#a4a4a4"></div>
<div class="a" style="left:190px;top:241px;width:1px;height:1px;background:#f8f8f8"></div>
<div class="a" style="left:193px;top:240px;width:2px;height:2px;background:#a4a4a4"></div>
<div class="a" style="left:194px;top:241px;width:1px;height:1px;background:#f8f8f8"></div>
<div class="a" style="left:197px;top:240px;width:2px;height:2px;background:#a4a4a4"></div>
<div class="a" style="left:198px;top:241px;width:1px;height:1px;background:#f8f8f8"></div>
<div class="btn" style="left:186px;top:476px;width:16px;height:16px"></div>
<svg style="left:186px;top:476px" width="16" height="16"><path d="M3.5 9 L11.5 9 L7.5 5 Z" fill="#000"/></svg>
<div class="btn" style="left:186px;top:492px;width:16px;height:16px"></div>
<svg style="left:186px;top:492px" width="16" height="16"><path d="M3.5 5 L11.5 5 L7.5 9 Z" fill="#000"/></svg>
<div class="a" style="left:9px;top:508px;width:177px;height:16px;background:#fff;background-image:repeating-conic-gradient(#e0e0e0 0 25%,#fdfdfd 0 50%);background-size:2px 2px"></div>
<div class="a" style="left:9px;top:508px;width:177px;height:1px;background:repeating-linear-gradient(90deg,#b8b8b8 0,#b8b8b8 1px,#fff 1px,#fff 2px)"></div>
<div class="a" style="left:9px;top:523px;width:177px;height:1px;background:repeating-linear-gradient(90deg,#b8b8b8 0,#b8b8b8 1px,#fff 1px,#fff 2px)"></div>
<div class="a" style="left:186px;top:508px;width:16px;height:16px;background:#e8e8e8"></div>
<div class="btn" style="left:9px;top:508px;width:16px;height:16px"></div>
<svg style="left:9px;top:508px" width="16" height="16"><path d="M9.3 3.5 L9.3 11.5 L5 7.5 Z" fill="#000"/></svg>
<div class="btn" style="left:35px;top:508px;width:55px;height:16px;background:linear-gradient(#fafafa,#e4e4e4)"></div>
<div class="a" style="left:54px;top:511px;width:2px;height:2px;background:#a4a4a4"></div>
<div class="a" style="left:55px;top:512px;width:1px;height:1px;background:#f8f8f8"></div>
<div class="a" style="left:58px;top:511px;width:2px;height:2px;background:#a4a4a4"></div>
<div class="a" style="left:59px;top:512px;width:1px;height:1px;background:#f8f8f8"></div>
<div class="a" style="left:62px;top:511px;width:2px;height:2px;background:#a4a4a4"></div>
<div class="a" style="left:63px;top:512px;width:1px;height:1px;background:#f8f8f8"></div>
<div class="a" style="left:66px;top:511px;width:2px;height:2px;background:#a4a4a4"></div>
<div class="a" style="left:67px;top:512px;width:1px;height:1px;background:#f8f8f8"></div>
<div class="a" style="left:70px;top:511px;width:2px;height:2px;background:#a4a4a4"></div>
<div class="a" style="left:71px;top:512px;width:1px;height:1px;background:#f8f8f8"></div>
<div class="a" style="left:54px;top:515px;width:2px;height:2px;background:#a4a4a4"></div>
<div class="a" style="left:55px;top:516px;width:1px;height:1px;background:#f8f8f8"></div>
<div class="a" style="left:58px;top:515px;width:2px;height:2px;background:#a4a4a4"></div>
<div class="a" style="left:59px;top:516px;width:1px;height:1px;background:#f8f8f8"></div>
<div class="a" style="left:62px;top:515px;width:2px;height:2px;background:#a4a4a4"></div>
<div class="a" style="left:63px;top:516px;width:1px;height:1px;background:#f8f8f8"></div>
<div class="a" style="left:66px;top:515px;width:2px;height:2px;background:#a4a4a4"></div>
<div class="a" style="left:67px;top:516px;width:1px;height:1px;background:#f8f8f8"></div>
<div class="a" style="left:70px;top:515px;width:2px;height:2px;background:#a4a4a4"></div>
<div class="a" style="left:71px;top:516px;width:1px;height:1px;background:#f8f8f8"></div>
<div class="a" style="left:54px;top:519px;width:2px;height:2px;background:#a4a4a4"></div>
<div class="a" style="left:55px;top:520px;width:1px;height:1px;background:#f8f8f8"></div>
<div class="a" style="left:58px;top:519px;width:2px;height:2px;background:#a4a4a4"></div>
<div class="a" style="left:59px;top:520px;width:1px;height:1px;background:#f8f8f8"></div>
<div class="a" style="left:62px;top:519px;width:2px;height:2px;background:#a4a4a4"></div>
<div class="a" style="left:63px;top:520px;width:1px;height:1px;background:#f8f8f8"></div>
<div class="a" style="left:66px;top:519px;width:2px;height:2px;background:#a4a4a4"></div>
<div class="a" style="left:67px;top:520px;width:1px;height:1px;background:#f8f8f8"></div>
<div class="a" style="left:70px;top:519px;width:2px;height:2px;background:#a4a4a4"></div>
<div class="a" style="left:71px;top:520px;width:1px;height:1px;background:#f8f8f8"></div>
<div class="btn" style="left:154px;top:508px;width:16px;height:16px"></div>
<svg style="left:154px;top:508px" width="16" height="16"><path d="M9.3 3.5 L9.3 11.5 L5 7.5 Z" fill="#000"/></svg>
<div class="btn" style="left:170px;top:508px;width:16px;height:16px"></div>
<svg style="left:170px;top:508px" width="16" height="16"><path d="M5 3.5 L5 11.5 L9.3 7.5 Z" fill="#000"/></svg>
<div class="a" style="left:206px;top:244px;width:2px;height:2px;background:#a8a8a8"></div>
<div class="a" style="left:207px;top:245px;width:2px;height:2px;background:#fbfbfb"></div>
<div class="a" style="left:206px;top:249px;width:2px;height:2px;background:#a8a8a8"></div>
<div class="a" style="left:207px;top:250px;width:2px;height:2px;background:#fbfbfb"></div>
<div class="a" style="left:206px;top:254px;width:2px;height:2px;background:#a8a8a8"></div>
<div class="a" style="left:207px;top:255px;width:2px;height:2px;background:#fbfbfb"></div>
<div class="a" style="left:206px;top:259px;width:2px;height:2px;background:#a8a8a8"></div>
<div class="a" style="left:207px;top:260px;width:2px;height:2px;background:#fbfbfb"></div>
<div class="a" style="left:206px;top:264px;width:2px;height:2px;background:#a8a8a8"></div>
<div class="a" style="left:207px;top:265px;width:2px;height:2px;background:#fbfbfb"></div>
<div class="a" style="left:206px;top:269px;width:2px;height:2px;background:#a8a8a8"></div>
<div class="a" style="left:207px;top:270px;width:2px;height:2px;background:#fbfbfb"></div>
<div class="a" style="left:206px;top:274px;width:2px;height:2px;background:#a8a8a8"></div>
<div class="a" style="left:207px;top:275px;width:2px;height:2px;background:#fbfbfb"></div>
<div class="a" style="left:206px;top:279px;width:2px;height:2px;background:#a8a8a8"></div>
<div class="a" style="left:207px;top:280px;width:2px;height:2px;background:#fbfbfb"></div>
<div class="a" style="left:206px;top:284px;width:2px;height:2px;background:#a8a8a8"></div>
<div class="a" style="left:207px;top:285px;width:2px;height:2px;background:#fbfbfb"></div>
<div class="a" style="left:206px;top:289px;width:2px;height:2px;background:#a8a8a8"></div>
<div class="a" style="left:207px;top:290px;width:2px;height:2px;background:#fbfbfb"></div>
<div class="a" style="left:206px;top:294px;width:2px;height:2px;background:#a8a8a8"></div>
<div class="a" style="left:207px;top:295px;width:2px;height:2px;background:#fbfbfb"></div>
<div class="a" style="left:206px;top:299px;width:2px;height:2px;background:#a8a8a8"></div>
<div class="a" style="left:207px;top:300px;width:2px;height:2px;background:#fbfbfb"></div>
<div class="a" style="left:206px;top:304px;width:2px;height:2px;background:#a8a8a8"></div>
<div class="a" style="left:207px;top:305px;width:2px;height:2px;background:#fbfbfb"></div>
<div class="a" style="left:206px;top:309px;width:2px;height:2px;background:#a8a8a8"></div>
<div class="a" style="left:207px;top:310px;width:2px;height:2px;background:#fbfbfb"></div>
<div class="a" style="left:206px;top:314px;width:2px;height:2px;background:#a8a8a8"></div>
<div class="a" style="left:207px;top:315px;width:2px;height:2px;background:#fbfbfb"></div>
<div class="a" style="left:206px;top:319px;width:2px;height:2px;background:#a8a8a8"></div>
<div class="a" style="left:207px;top:320px;width:2px;height:2px;background:#fbfbfb"></div>
<div class="a" style="left:206px;top:324px;width:2px;height:2px;background:#a8a8a8"></div>
<div class="a" style="left:207px;top:325px;width:2px;height:2px;background:#fbfbfb"></div>
<div class="a" style="left:206px;top:329px;width:2px;height:2px;background:#a8a8a8"></div>
<div class="a" style="left:207px;top:330px;width:2px;height:2px;background:#fbfbfb"></div>
<div class="a" style="left:206px;top:334px;width:2px;height:2px;background:#a8a8a8"></div>
<div class="a" style="left:207px;top:335px;width:2px;height:2px;background:#fbfbfb"></div>
<div class="a" style="left:206px;top:339px;width:2px;height:2px;background:#a8a8a8"></div>
<div class="a" style="left:207px;top:340px;width:2px;height:2px;background:#fbfbfb"></div>
<div class="a" style="left:206px;top:344px;width:2px;height:2px;background:#a8a8a8"></div>
<div class="a" style="left:207px;top:345px;width:2px;height:2px;background:#fbfbfb"></div>
<div class="a" style="left:206px;top:349px;width:2px;height:2px;background:#a8a8a8"></div>
<div class="a" style="left:207px;top:350px;width:2px;height:2px;background:#fbfbfb"></div>
<div class="a" style="left:206px;top:354px;width:2px;height:2px;background:#a8a8a8"></div>
<div class="a" style="left:207px;top:355px;width:2px;height:2px;background:#fbfbfb"></div>
<div class="a" style="left:206px;top:359px;width:2px;height:2px;background:#a8a8a8"></div>
<div class="a" style="left:207px;top:360px;width:2px;height:2px;background:#fbfbfb"></div>
<div class="a" style="left:206px;top:364px;width:2px;height:2px;background:#a8a8a8"></div>
<div class="a" style="left:207px;top:365px;width:2px;height:2px;background:#fbfbfb"></div>
<div class="a" style="left:206px;top:369px;width:2px;height:2px;background:#a8a8a8"></div>
<div class="a" style="left:207px;top:370px;width:2px;height:2px;background:#fbfbfb"></div>
<div class="a" style="left:206px;top:374px;width:2px;height:2px;background:#a8a8a8"></div>
<div class="a" style="left:207px;top:375px;width:2px;height:2px;background:#fbfbfb"></div>
<div class="a" style="left:206px;top:379px;width:2px;height:2px;background:#a8a8a8"></div>
<div class="a" style="left:207px;top:380px;width:2px;height:2px;background:#fbfbfb"></div>
<div class="a" style="left:206px;top:384px;width:2px;height:2px;background:#a8a8a8"></div>
<div class="a" style="left:207px;top:385px;width:2px;height:2px;background:#fbfbfb"></div>
<div class="a" style="left:206px;top:389px;width:2px;height:2px;background:#a8a8a8"></div>
<div class="a" style="left:207px;top:390px;width:2px;height:2px;background:#fbfbfb"></div>
<div class="a" style="left:7px;top:533px;width:197px;height:20px;border:1px solid #8c8c8c;border-radius:3px;background:#fff;box-shadow:inset 1px 1px 0 #a8a8a8"></div>
<div class="a" style="left:210px;top:91px;width:403px;height:462px;background:#e8e8e8"></div>
<div class="a" style="left:210px;top:91px;width:402px;height:2px;background:#fbfbfb"></div>
<div class="a" style="left:210px;top:91px;width:2px;height:461px;background:#fbfbfb"></div>
<div class="a" style="left:612px;top:91px;width:1px;height:462px;background:#000"></div>
<div class="a" style="left:210px;top:552px;width:403px;height:1px;background:#000"></div>
<div class="t" style="left:348px;top:105px;font-weight:bold;font-style:italic;font-size:16px">Parameter: KSH21</div>
<div class="a" style="left:295px;top:136px;width:72px;height:18px;border:1px solid #8c8c8c;border-bottom:none;border-radius:0 2px 0 0;background:linear-gradient(#fdfdfd,#e2e2e2)"></div>
<div class="a" style="left:366px;top:136px;width:71px;height:18px;border:1px solid #8c8c8c;border-bottom:none;border-radius:2px 2px 0 0;background:linear-gradient(#fdfdfd,#e2e2e2)"></div>
<div class="a" style="left:221px;top:153px;width:381px;height:389px;border:1px solid #8c8c8c;border-radius:0 2px 2px 2px;background:#e8e8e8"></div>
<div class="a" style="left:222px;top:154px;width:379px;height:387px;border:1px solid #f2f2f2"></div>
<div class="a" style="left:223px;top:155px;width:377px;height:385px;border:1px solid #fde38a"></div>
<div class="a" style="left:224px;top:156px;width:375px;height:383px;border:1px solid #fde38a;border-top-color:#d8b85c;border-left-color:#d8b85c"></div>
<div class="a" style="left:221px;top:133px;width:75px;height:22px;border:1px solid #8c8c8c;border-bottom:none;border-radius:3px 3px 0 0;background:#e8e8e8;box-shadow:inset 1px 1px 0 #fafafa"></div>
<div class="a" style="left:222px;top:153px;width:73px;height:2px;background:#e8e8e8"></div>
<div class="t" style="left:233px;top:136px;">Parameter</div>
<div class="t" style="left:309px;top:137px;">Atributes</div>
<div class="t" style="left:379px;top:137px;">Archiving</div>
<div class="a" style="left:234px;top:173px;width:355px;height:60px;border:1px solid #8c8c8c;border-radius:3px"></div>
<div class="a" style="left:242px;top:172px;width:30px;height:3px;background:#e8e8e8"></div>
<div class="t" style="left:243px;top:165px;">State</div>
<div class="a" style="left:234px;top:244px;width:355px;height:282px;border:1px solid #8c8c8c;border-radius:3px"></div>
<div class="a" style="left:243px;top:243px;width:34px;height:3px;background:#e8e8e8"></div>
<div class="t" style="left:244px;top:236px;">Config</div>
<div class="t" style="left:239px;top:184px;">Type:</div>
<div class="t" style="left:271px;top:187px;font-weight:bold;letter-spacing:1px;-webkit-text-stroke:0.5px #000">std</div>
<div class="t" style="left:238px;top:210px;">Enable:</div>
<div class="a" style="left:280px;top:211px;width:13px;height:13px;border:1px solid #8c8c8c;border-radius:1px;background:#fff"></div>
<svg style="left:280px;top:211px" width="13" height="13" viewBox="0 0 13 13"><path d="M2.9 4.7 L5.9 9.6 L10 2.7" stroke="#000" stroke-width="3" fill="none" stroke-linejoin="round"/><circle cx="5.9" cy="9" r="1.9" fill="#000"/></svg>
<div class="t" style="left:238px;top:254px;">ID:</div>
<div class="t" style="left:256px;top:257px;font-weight:bold;-webkit-text-stroke:0.45px #000">КШ21</div>
<div class="t" style="left:238px;top:280px;">Name:</div>
<div class="a" style="left:275px;top:278px;width:309px;height:20px;border:1px solid #8c8c8c;border-top-color:#777;border-radius:3px;background:#fff;box-shadow:inset 1px 1px 0 #b0b0b0"></div>
<div class="t" style="left:279px;top:280px;">KSH21</div>
<div class="t" style="left:238px;top:300px;">Description:</div>
<div class="a" style="left:239px;top:318px;width:345px;height:80px;border:1px solid #8c8c8c;border-top-color:#777;border-radius:2px;background:#fff;box-shadow:inset 1px 1px 0 #b0b0b0"></div>
<div class="t" style="left:238px;top:403px;">To enable:</div>
<div class="a" style="left:294px;top:404px;width:13px;height:13px;border:1px solid #8c8c8c;border-radius:1px;background:#fff"></div>
<svg style="left:294px;top:404px" width="13" height="13" viewBox="0 0 13 13"><path d="M2.9 4.7 L5.9 9.6 L10 2.7" stroke="#000" stroke-width="3" fill="none" stroke-linejoin="round"/><circle cx="5.9" cy="9" r="1.9" fill="#000"/></svg>
<div class="t" style="left:238px;top:423px;">Blocks' IOs:</div>
<div class="a" style="left:239px;top:441px;width:345px;height:80px;border:1px solid #8c8c8c;border-top-color:#777;border-radius:2px;background:#fff;box-shadow:inset 1px 1px 0 #b0b0b0"></div>
<div class="t" style="left:244px;top:446px;letter-spacing:0px">КШ21им.com:com</div>
<div class="t" style="left:244px;top:460px;letter-spacing:0.05px">КШ21им.st_open:st_open</div>
<div class="t" style="left:244px;top:474px;letter-spacing:0.12px">КШ21им.st_close:st_close</div>
<div class="a" style="left:555px;top:558px;width:7px;height:16px;border:1px solid #8c8c8c;border-left:none;border-radius:0 2px 2px 0"></div>
<div class="t" style="left:555.5px;top:558px;">*</div>
<div class="a" style="left:564px;top:558px;width:34px;height:16px;border:1px solid #8c8c8c;border-radius:2px"></div>
<div class="t" style="left:565px;top:558px;color:#007800">roman</div>
<svg style="left:602px;top:561px" width="14" height="14" viewBox="0 0 14 14"><path d="M1 14 L14 1 M5 14 L14 5 M9 14 L14 9" stroke="#fff" stroke-width="1.5"/><path d="M2.5 14 L14 2.5 M6.5 14 L14 6.5 M10.5 14 L14 10.5" stroke="#a8a8a8" stroke-width="1.5"/></svg>
</body></html>
